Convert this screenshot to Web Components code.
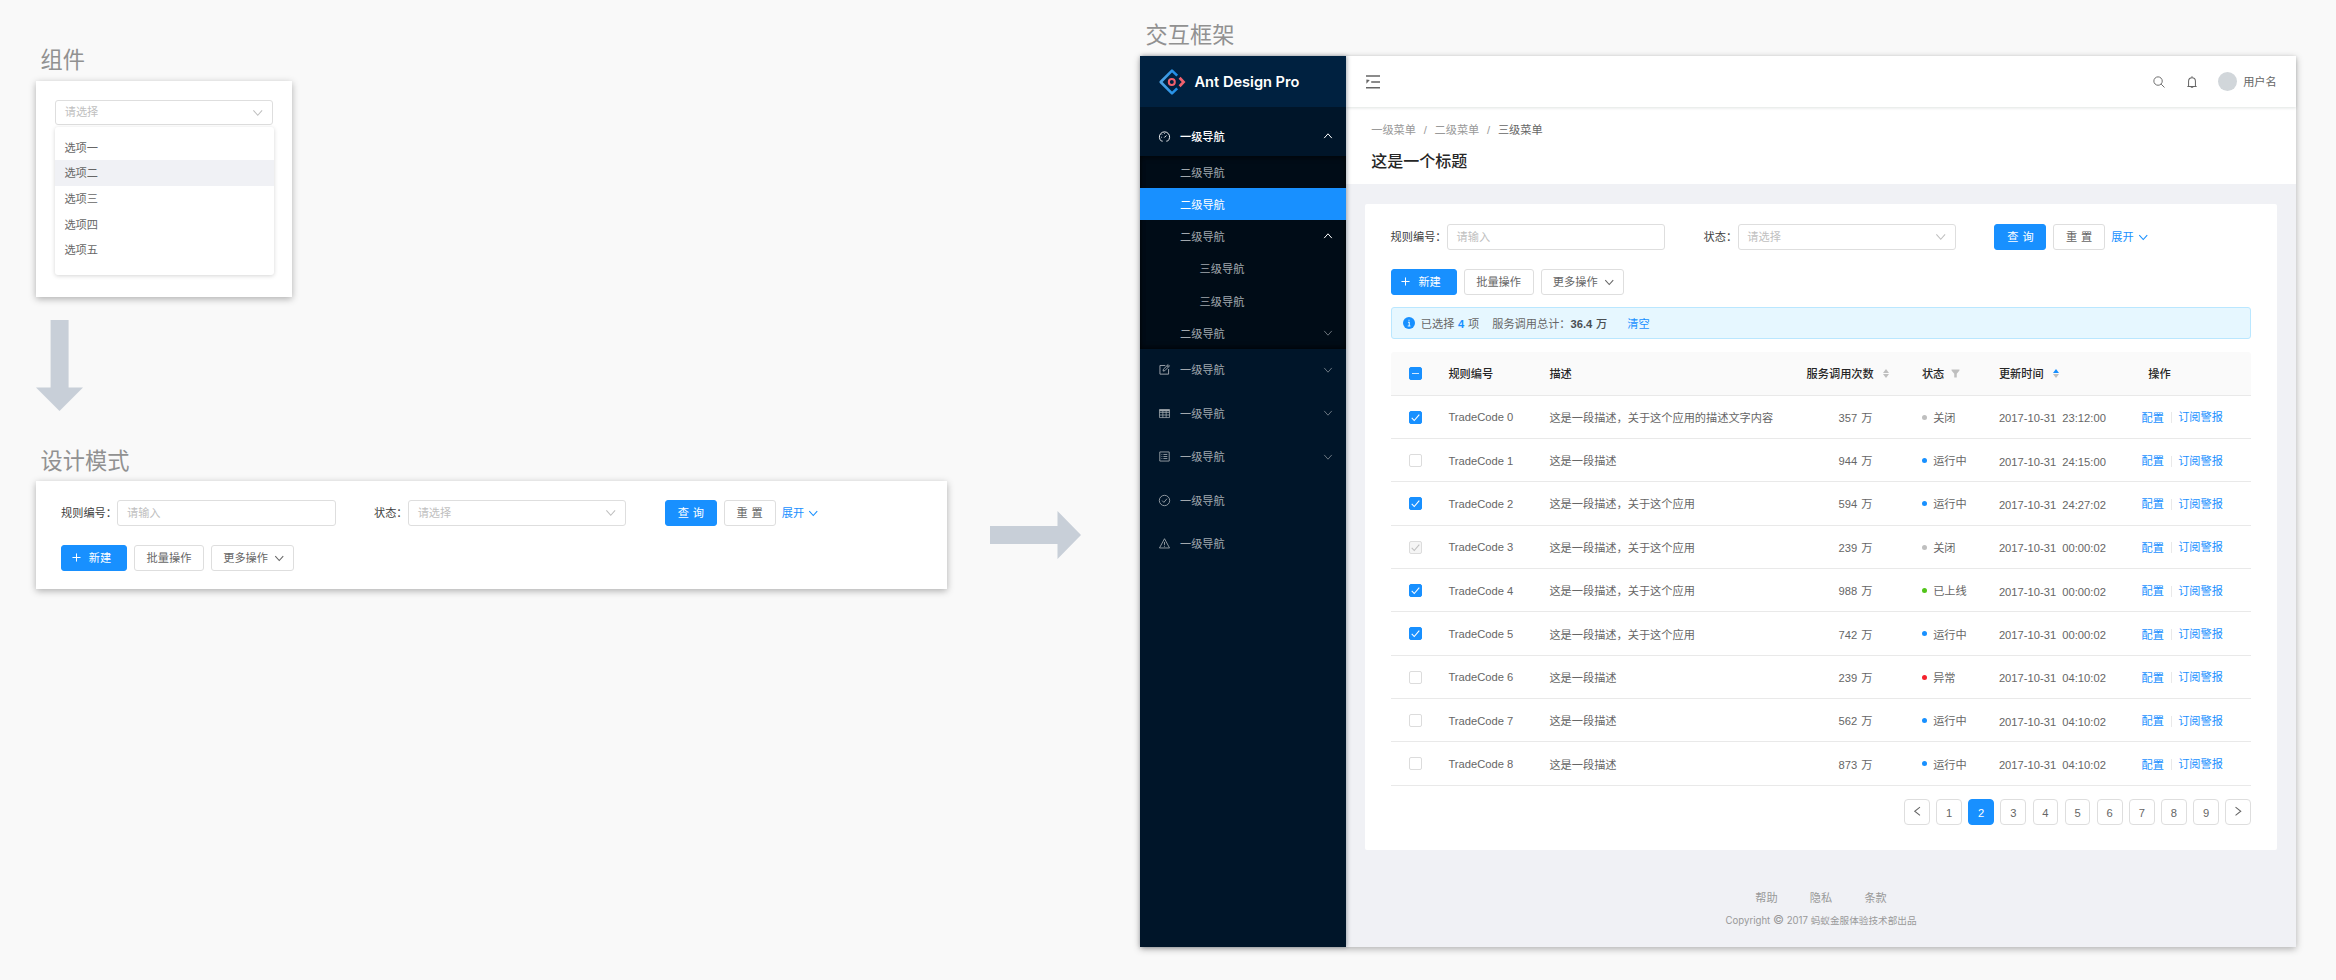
<!DOCTYPE html>
<html lang="zh-CN">
<head>
<meta charset="utf-8">
<title>Ant Design Pro</title>
<style>
html,body{
  margin:0;
  width:2336px;
  height:980px;
  overflow:hidden;
}
body{
  background:#f9f9f9;
  font:11.2px/16px "Liberation Sans","Noto Sans CJK SC",sans-serif;
  color:#666;
}
</style>
</head>
<body>
<spec-board></spec-board>
<script>
const icons={
  down:['0 0 10 10','<path d="M1.2 2.9 5 7.2 8.8 2.9"/>'],
  up:['0 0 10 10','<path d="M1.2 7.1 5 2.8 8.8 7.1"/>'],
  left:['0 0 10 10','<path d="M7.6 1 2.6 5l5 4"/>'],
  right:['0 0 10 10','<path d="M2.4 1l5 4-5 4"/>'],
  plus:['0 0 10 10','<path d="M5 .5v9M.5 5h9"/>'],
  check:['0 0 10 10','<path d="M.8 5.4 3.6 8.4 9.2 1.8"/>'],
  dashboard:['0 0 14 14','<path d="M4.6 12.9H3.2A6.5 6.5 0 1 1 10.8 12.9H9.4M6.8 8.3 9.4 5.7M2.6 7.9h.9M3.9 4.5l.6.6M7 3v.8"/>'],
  edit:['0 0 14 14','<path d="M8 1.9H1.2v11h11V6.4M5.2 9l.4-2.3L11.6.8l1.7 1.7L7.4 8.5zM10.2 2.2 12 4"/>'],
  table:['0 0 14 14','<path d="M.6 2h12.8v10.2H.6zM.6 5.6h12.8M.6 8.9h12.8M4.9 3.5v8.7M9.1 3.5v8.7"/><path d="M.6 2.6h12.8M.6 3.4h12.8" stroke-width="1.4"/>'],
  list:['0 0 14 14','<path d="M1 1.2h12v11.6H1zM5.6 4.4h5M5.6 7h5M5.6 9.6h5M3.2 4.4h1M3.2 7h1M3.2 9.6h1"/>'],
  checkCircle:['0 0 14 14','<circle cx="7" cy="7" r="6.6"/><path d="M4 7.1 6.2 9.4 10.2 4.7"/>'],
  warning:['0 0 14 14','<path d="M7 .9 13.4 12.7H.6zM7 5v3.8M7 9.9v1.2"/>'],
  search:['0 0 14 14','<circle cx="5.9" cy="5.9" r="4.9"/><path d="M9.5 9.5 13.4 13.4"/>'],
  bell:['0 0 14 14','<path d="M1.6 12.2h10.8M3 12.2V6a4 4 0 0 1 8 0v6.2M7 .4V2M5.6 13.2h2.8"/>'],
  fold:['0 0 14 14','<path d="M0 1h14M5.2 6.9H14M0 12.8h14"/><path d="M.4 4.4v4.4L3.8 5z" fill="currentColor" stroke="none"/>'],
  filter:['0 0 10 10','<path d="M.6.6h8.8v1.2L6.4 5.4v4H3.6v-4L.6 1.8z" fill="currentColor" stroke="none"/>'],
  info:['0 0 14 14','<circle cx="7" cy="7" r="7" fill="currentColor" stroke="none"/><path d="M5.8 6.2h1.5v4M5.5 10.4h3.2M6.4 3.8h1.2" stroke="#e6f7ff" stroke-width="1.2"/>'],
  logo:['0 0 26 26','<defs><linearGradient id="g" x1="0" y1="0" x2="1" y2="0"><stop offset="0" stop-color="#4fa3e3"/><stop offset="1" stop-color="#1c8de8"/></linearGradient></defs><path d="M18.2 6.6 13 1.6 1.7 13 13 24.4 18.2 19.4" stroke="url(#g)" stroke-width="2.6" stroke-linejoin="round"/><circle cx="12.8" cy="13" r="3" stroke="#f0616d" stroke-width="2"/><path d="M20.6 8.8 24.6 13 20.6 17.2" stroke="#f0616d" stroke-width="2.7"/>']
};

class AdIcon extends HTMLElement{
constructor(){
  super();
  this.attachShadow({mode:'open'});
}
connectedCallback(){
  const [box,body]=icons[this.getAttribute('name')];
  const size=this.getAttribute('size')||11;
  const stroke=this.getAttribute('stroke')||1;
  this.shadowRoot.innerHTML=`<style>
:host{
  display:inline-flex;
  flex:none;
}
svg{
  display:block;
  overflow:visible;
}
</style><svg width="${size}" height="${size}" viewBox="${box}" fill="none" stroke="currentColor" stroke-width="${stroke}">${body}</svg>`;
}
}
customElements.define('ad-icon',AdIcon);

// registers an element whose shadow root never changes
const define=(name,html)=>{
  const template=document.createElement('template');
  template.innerHTML=html;
  customElements.define(name,class extends HTMLElement{
    constructor(){
      super();
      this.attachShadow({mode:'open'}).appendChild(template.content.cloneNode(true));
    }
  });
};

define('section-title',`<style>
:host{
  display:block;
  height:22px;
  font-size:22.2px;
  line-height:22px;
  color:#919191;
  white-space:nowrap;
}
</style><slot></slot>`);

define('ad-panel',`<style>
:host{
  display:block;
  box-sizing:border-box;
  background:#fff;
  box-shadow:0 2px 7px rgba(0,0,0,.3);
}
</style><slot></slot>`);

define('ad-input',`<style>
:host{
  display:flex;
  box-sizing:border-box;
  align-items:center;
  justify-content:space-between;
  width:218.4px;
  height:25.7px;
  padding:0 8.5px 0 8.7px;
  border:1px solid #dedede;
  border-radius:3px;
  background:#fff;
  color:#bfbfbf;
}
</style><span><slot></slot></span><slot name="suffix"></slot>`);

define('ad-button',`<style>
:host{
  display:flex;
  box-sizing:border-box;
  align-items:center;
  justify-content:center;
  height:25.7px;
  border:1px solid #dedede;
  border-radius:3px;
  background:#fff;
  color:#666;
  white-space:pre;
  word-spacing:.8px;
}
:host([primary]){
  border-color:#1890ff;
  background:#1890ff;
  color:#fff;
}
</style><slot></slot>`);

define('ad-dropdown',`<style>
:host{
  display:block;
  box-sizing:border-box;
  width:219px;
  height:148px;
  margin-top:2px;
  padding-top:7.3px;
  border-radius:3px;
  background:#fff;
  box-shadow:0 1px 4px rgba(0,0,0,.17);
}
::slotted(div){
  height:25.7px;
  padding-left:9.4px;
  line-height:27px;
}
::slotted(.active){
  background:#f0f1f5;
}
</style><slot></slot>`);

define('flow-arrow',`<style>
:host{
  display:block;
  color:#c8cfd8;
}
svg{
  display:block;
}
svg+svg,:host([right]) svg:first-of-type{
  display:none;
}
:host([right]) svg+svg{
  display:block;
}
</style>
<svg width="47" height="91" viewBox="0 0 47 91" fill="currentColor"><path d="M14.6 0h18v67.5h14.4L23.5 91 0 67.5h14.6z"/></svg>
<svg width="91" height="48" viewBox="0 0 91 48" fill="currentColor"><path d="M0 15h67.5V0L91 24 67.5 48V33H0z"/></svg>`);

define('query-form',`<style>
:host{
  display:block;
  white-space:nowrap;
}
.row{
  display:flex;
  align-items:center;
  height:25.7px;
}
.row+.row{
  margin-top:19.3px;
}
label{
  width:56.3px;
  color:#404040;
}
.state{
  width:34px;
  margin-left:38.3px;
}
.query{
  width:52px;
  margin-left:38.5px;
}
.reset{
  width:52px;
  margin-left:6.7px;
}
a{
  display:flex;
  align-items:center;
  gap:4px;
  margin-left:6.2px;
  color:#1890ff;
}
.new{
  width:66px;
}
.new ad-icon{
  margin-right:8px;
}
.new span{
  margin-right:5px;
}
.batch{
  width:70px;
  margin-left:7px;
}
.more{
  width:83px;
  margin-left:7px;
  padding-left:3px;
}
.more ad-icon{
  margin-left:6.3px;
}
</style>
<div class="row">
  <label>规则编号：</label><ad-input>请输入</ad-input>
  <label class="state">状态：</label><ad-input>请选择<ad-icon slot="suffix" name="down" size="11.5" stroke=".9"></ad-icon></ad-input>
  <ad-button class="query" primary>查 询</ad-button>
  <ad-button class="reset">重 置</ad-button>
  <a>展开<ad-icon name="down" size="10.5" stroke="1"></ad-icon></a>
</div>
<div class="row">
  <ad-button class="new" primary><ad-icon name="plus" size="9" stroke="1.1"></ad-icon><span>新建</span></ad-button>
  <ad-button class="batch">批量操作</ad-button>
  <ad-button class="more">更多操作<ad-icon name="down" size="10.5" stroke="1"></ad-icon></ad-button>
</div>`);

define('menu-item',`<style>
:host{
  display:flex;
  box-sizing:border-box;
  align-items:center;
  height:32.15px;
  padding:0 13px 0 40px;
  color:#a1a8ae;
}
:host([root]){
  height:43.5px;
  padding-left:19.3px;
}
:host([deep]){
  padding-left:59.6px;
}
:host([open]){
  color:#fff;
  font-weight:500;
}
:host([selected]){
  background:#1890ff;
  color:#fff;
}
span{
  flex:1;
  padding-top:2px;
}
:host([root]) span{
  padding-top:1px;
}
::slotted([slot=icon]){
  margin-right:9.7px;
}
</style><slot name="icon"></slot><span><slot></slot></span><slot name="arrow"></slot>`);

define('side-menu',`<style>
:host{
  display:block;
  box-sizing:border-box;
  width:206px;
  height:891px;
  background:#001529;
  box-shadow:1px 0 4px rgba(0,21,41,.35);
}
.brand{
  display:flex;
  box-sizing:border-box;
  align-items:center;
  height:51.4px;
  padding-left:19px;
  background:#002140;
  color:#fff;
  font:600 14.6px/20px Inter,"Liberation Sans",sans-serif;
}
.brand ad-icon{
  margin-right:9.5px;
}
.first{
  padding-top:7.2px;
  height:41.4px;
}
.sub{
  height:193px;
  margin-bottom:-1px;
  background:#000c17;
  box-shadow:inset 0 2px 5px rgba(0,0,0,.5),inset 0 -2px 5px rgba(0,0,0,.5);
}
.off{
  opacity:.65;
}
</style>
<div class="brand"><ad-icon name="logo" size="26"></ad-icon>Ant Design Pro</div>
<div class="first"><menu-item root open><ad-icon slot="icon" name="dashboard" stroke="1.2"></ad-icon>一级导航<ad-icon slot="arrow" name="up" size="10"></ad-icon></menu-item></div>
<div class="sub">
  <menu-item>二级导航</menu-item>
  <menu-item selected>二级导航</menu-item>
  <menu-item>二级导航<ad-icon slot="arrow" name="up" size="10" style="color:#fff"></ad-icon></menu-item>
  <menu-item deep>三级导航</menu-item>
  <menu-item deep>三级导航</menu-item>
  <menu-item>二级导航<ad-icon class="off" slot="arrow" name="down" size="10"></ad-icon></menu-item>
</div>
<menu-item root><ad-icon slot="icon" name="edit" stroke="1.2"></ad-icon>一级导航<ad-icon class="off" slot="arrow" name="down" size="10"></ad-icon></menu-item>
<menu-item root><ad-icon slot="icon" name="table"></ad-icon>一级导航<ad-icon class="off" slot="arrow" name="down" size="10"></ad-icon></menu-item>
<menu-item root><ad-icon slot="icon" name="list" stroke="1.1"></ad-icon>一级导航<ad-icon class="off" slot="arrow" name="down" size="10"></ad-icon></menu-item>
<menu-item root><ad-icon slot="icon" name="checkCircle" stroke="1.1"></ad-icon>一级导航</menu-item>
<menu-item root><ad-icon slot="icon" name="warning" stroke="1.1"></ad-icon>一级导航</menu-item>`);

define('top-bar',`<style>
:host{
  display:flex;
  box-sizing:border-box;
  align-items:center;
  height:51px;
  padding:0 19.3px 0 20px;
  background:#fff;
  box-shadow:0 1px 3px rgba(0,40,20,.13);
  position:relative;
}
.right{
  display:flex;
  align-items:center;
  margin-left:auto;
}
.bell{
  margin:0 19.7px 0 20.6px;
}
i{
  width:19.6px;
  height:19.6px;
  margin-right:6px;
  border-radius:50%;
  background:#d1d6da;
}
</style>
<ad-icon name="fold" size="14" stroke="1.5"></ad-icon>
<div class="right">
  <ad-icon name="search" size="12" stroke="1.1"></ad-icon>
  <ad-icon class="bell" name="bell" size="12" stroke="1.2"></ad-icon>
  <i></i><span>用户名</span>
</div>`);

define('page-head',`<style>
:host{
  display:block;
  box-sizing:border-box;
  height:77px;
  padding:14.5px 25.2px 0;
  background:#fff;
}
nav{
  display:flex;
  color:#999;
}
nav b{
  width:18.6px;
  text-align:center;
  font-weight:400;
}
nav span:last-child{
  color:#666;
}
h1{
  margin:14px 0 0;
  font-size:16px;
  line-height:20px;
  font-weight:500;
  color:#262626;
}
</style>
<nav><span>一级菜单</span><b>/</b><span>二级菜单</span><b>/</b><span>三级菜单</span></nav>
<h1>这是一个标题</h1>`);

define('select-alert',`<style>
:host{
  display:flex;
  box-sizing:border-box;
  align-items:center;
  height:32.3px;
  padding-left:11px;
  border:1px solid #bae7ff;
  border-radius:3px;
  background:#e6f7ff;
  white-space:pre;
  word-spacing:.6px;
}
ad-icon{
  margin-right:6.2px;
  color:#1890ff;
}
span,a{
  padding-top:1.5px;
}
b{
  font-weight:600;
}
.count,a{
  color:#1890ff;
}
.total{
  margin-left:13px;
}
.sum{
  color:#4a4f53;
  font-weight:500;
}
a{
  margin-left:20px;
}
</style><ad-icon name="info" size="12"></ad-icon><span>已选择 <b class="count">4</b> 项</span><span class="total">服务调用总计：<span class="sum"><b>36.4</b> 万</span></span><a>清空</a>`);

class AdCheckbox extends HTMLElement{
constructor(){
  super();
  this.attachShadow({mode:'open'});
}
connectedCallback(){
  const state=this.getAttribute('state');
  const marks={
    on:'<ad-icon name="check" size="9" stroke="1.2"></ad-icon>',
    disabled:'<ad-icon name="check" size="9" stroke="1.2"></ad-icon>',
    some:'<i></i>'
  };
  this.shadowRoot.innerHTML=`<style>
:host{
  display:flex;
  box-sizing:border-box;
  align-items:center;
  justify-content:center;
  width:13px;
  height:13px;
  border:1px solid #dcdcdc;
  border-radius:2px;
  background:#fff;
}
:host([state=on]),:host([state=some]){
  border-color:#1890ff;
  background:#1890ff;
  color:#fff;
}
:host([state=disabled]){
  background:#f5f5f5;
  color:#bfbfbf;
}
i{
  width:7px;
  height:1px;
  background:#d1e9ff;
}
</style>${marks[state]||''}`;
}
}
customElements.define('ad-checkbox',AdCheckbox);

define('ad-sorter',`<style>
:host{
  display:flex;
  flex-direction:column;
  align-items:center;
  gap:1px;
  --up:#bfbfbf;
}
:host([asc]){
  --up:#1890ff;
}
i{
  border:3px solid transparent;
  border-top-width:0;
  border-bottom:4px solid var(--up);
}
i+i{
  border-top:4px solid #bfbfbf;
  border-bottom-width:0;
}
</style><i></i><i></i>`);

const colors={'关闭':'#bfbfbf','运行中':'#1890ff','已上线':'#52c41a','异常':'#f5222d'};

class RuleTable extends HTMLElement{
constructor(){
  super();
  this.attachShadow({mode:'open'}).innerHTML=`<style>
:host{
  display:block;
}
.tr{
  display:grid;
  box-sizing:border-box;
  grid-template-columns:57.8px 101px 257.2px 115.3px 77px 142.7px 1fr;
  align-items:center;
  height:43.35px;
  border-bottom:1px solid #e9e9e9;
  white-space:pre;
}
.head{
  border-radius:3px 3px 0 0;
  background:#fafafa;
  color:#262626;
  font-weight:500;
}
.tr>div{
  display:flex;
  align-items:center;
  padding-top:2px;
}
.tr>div:first-child{
  padding:.5px 0 0 18.6px;
}
.head>div,.tr>.code{
  padding-top:1px;
}
.head ad-sorter{
  margin:0 0 1px 9px;
}
.head ad-icon{
  margin-left:6.7px;
  color:#bfbfbf;
}
.head>div:last-child{
  padding-left:6.7px;
}
.num{
  padding-left:32px;
  word-spacing:.8px;
}
.tr>.time{
  padding-top:3px;
}
.dot{
  width:5px;
  height:5px;
  margin:0 6.3px 1.5px 0;
  border-radius:50%;
}
a{
  color:#1890ff;
}
a+a{
  margin-left:7px;
  padding-left:6.2px;
  border-left:1px solid #e9e9e9;
  line-height:11px;
}
</style>
<div class="tr head"><div><ad-checkbox state="some"></ad-checkbox></div><div>规则编号</div><div>描述</div><div>服务调用次数<ad-sorter></ad-sorter></div><div>状态<ad-icon name="filter" size="9"></ad-icon></div><div>更新时间<ad-sorter asc></ad-sorter></div><div>操作</div></div>`;
}
connectedCallback(){
  const long='这是一段描述，关于这个应用';
  const short='这是一段描述';
  const rows=[
    ['on',`${long}的描述文字内容`,357,'关闭','23:12:00'],
    ['off',short,944,'运行中','24:15:00'],
    ['on',long,594,'运行中','24:27:02'],
    ['disabled',long,239,'关闭','00:00:02'],
    ['on',long,988,'已上线','00:00:02'],
    ['on',long,742,'运行中','00:00:02'],
    ['off',short,239,'异常','04:10:02'],
    ['off',short,562,'运行中','04:10:02'],
    ['off',short,873,'运行中','04:10:02']
  ];
  rows.forEach(([check,desc,num,state,time],i)=>{
    const tr=document.createElement('div');
    tr.className='tr';
    tr.innerHTML=`<div><ad-checkbox state="${check}"></ad-checkbox></div><div class="code">TradeCode ${i}</div><div>${desc}</div><div class="num">${num} 万</div><div><i class="dot" style="background:${colors[state]}"></i>${state}</div><div class="time">2017-10-31  ${time}</div><div><a>配置</a><a>订阅警报</a></div>`;
    this.shadowRoot.appendChild(tr);
  });
}
}
customElements.define('rule-table',RuleTable);

class PageNav extends HTMLElement{
constructor(){
  super();
  const pages=[1,2,3,4,5,6,7,8,9];
  this.attachShadow({mode:'open'}).innerHTML=`<style>
:host{
  display:flex;
  justify-content:flex-end;
  gap:6.45px;
}
div{
  display:flex;
  box-sizing:border-box;
  align-items:center;
  justify-content:center;
  width:25.7px;
  height:25.7px;
  padding-top:2.5px;
  border:1px solid #dedede;
  border-radius:4px;
  background:#fff;
}
.arrow{
  padding:0;
}
.current{
  border-color:#1890ff;
  background:#1890ff;
  color:#fff;
}
</style><div class="arrow"><ad-icon name="left" size="10.5"></ad-icon></div>${pages.map(p=>`<div${p===2?' class="current"':''}>${p}</div>`).join('')}<div class="arrow"><ad-icon name="right" size="10.5"></ad-icon></div>`;
}
}
customElements.define('page-nav',PageNav);

define('page-footer',`<style>
:host{
  display:flex;
  flex-direction:column;
  align-items:center;
  padding-top:40px;
  color:#999;
}
div{
  display:flex;
  gap:32.2px;
}
p{
  margin:7px 0 0;
  font:9.65px/16px Inter,"Noto Sans CJK SC",sans-serif;
}
.mark{
  font-size:12px;
  line-height:12px;
}
</style><div><span>帮助</span><span>隐私</span><span>条款</span></div><p>Copyright <span class="mark">©</span> 2017 蚂蚁金服体验技术部出品</p>`);

define('pro-frame',`<style>
:host{
  display:flex;
}
side-menu{
  position:relative;
  z-index:2;
}
main{
  flex:1;
  height:891px;
  background:#f0f1f5;
}
.card{
  box-sizing:border-box;
  height:646px;
  margin:20px 19px 0 19px;
  padding:20px 26px 0 25.6px;
  border-radius:2px;
  background:#fff;
}
select-alert{
  margin:12.3px 0 13px;
}
page-nav{
  margin-top:13.2px;
}
</style>
<side-menu></side-menu>
<main>
  <top-bar></top-bar>
  <page-head></page-head>
  <div class="card">
    <query-form></query-form>
    <select-alert></select-alert>
    <rule-table></rule-table>
    <page-nav></page-nav>
  </div>
  <page-footer></page-footer>
</main>`);

define('spec-board',`<style>
:host{
  display:flex;
  box-sizing:border-box;
  align-items:flex-start;
  width:2336px;
  height:980px;
  padding-left:36px;
}
.left{
  width:911px;
  padding-top:50px;
}
.left section-title{
  margin-left:4.6px;
}
.picker{
  width:256px;
  height:216px;
  margin-top:9px;
  padding:18.6px 19px 0;
}
.left flow-arrow{
  margin:23px 0 40px;
}
.pattern{
  height:108px;
  margin-top:8px;
  padding:19px 25px 0;
}
.between{
  width:91px;
  margin:511px 59px 0 43px;
}
.right{
  width:1156px;
  padding-top:25px;
}
.right section-title{
  margin-left:5.6px;
}
.frame{
  margin-top:9px;
}
</style>
<div class="left">
  <section-title>组件</section-title>
  <ad-panel class="picker">
    <ad-input>请选择<ad-icon slot="suffix" name="down" size="11.5" stroke=".9"></ad-icon></ad-input>
    <ad-dropdown>
      <div>选项一</div>
      <div class="active">选项二</div>
      <div>选项三</div>
      <div>选项四</div>
      <div>选项五</div>
    </ad-dropdown>
  </ad-panel>
  <flow-arrow></flow-arrow>
  <section-title>设计模式</section-title>
  <ad-panel class="pattern"><query-form></query-form></ad-panel>
</div>
<flow-arrow class="between" right></flow-arrow>
<div class="right">
  <section-title>交互框架</section-title>
  <ad-panel class="frame"><pro-frame></pro-frame></ad-panel>
</div>`);
</script>
</body>
</html>
